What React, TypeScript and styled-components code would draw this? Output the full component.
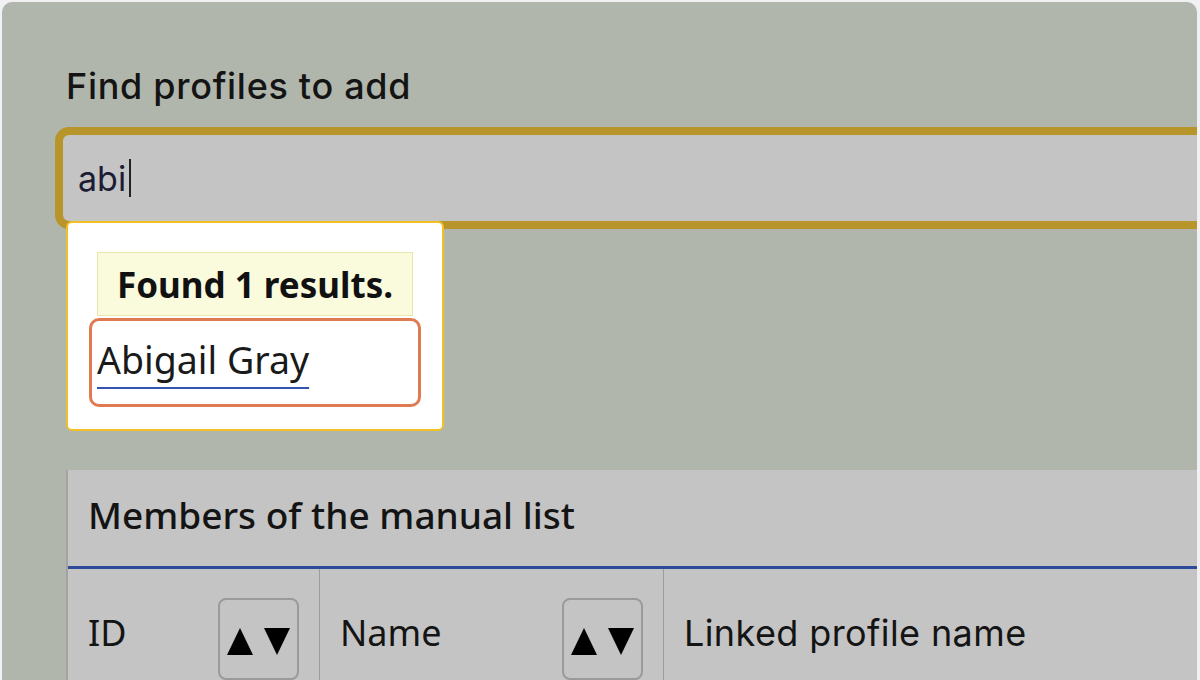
import styled, { createGlobalStyle } from "styled-components"

const GlobalStyle = createGlobalStyle`
  html, body {
    margin: 0;
    padding: 0;
    background: #f1f1f4;
    overflow: hidden;
  }
`

const Frame = styled.div`
  margin: 2px 3px 0 2px;
  height: 678px;
  border-radius: 10px 10px 0 0;
  background: #b1b6ac;
  overflow: hidden;
  padding: 0 0 0 53px;
  box-sizing: border-box;
  font-family: Inter, "Noto Sans", sans-serif;
  color: #141414;
`

const Heading = styled.h2`
  margin: 0;
  padding: 64px 0 0 11px;
  font-size: 36px;
  font-weight: 500;
  line-height: 40px;
  letter-spacing: 0.7px;
`

const SearchWrap = styled.div`
  position: relative;
  margin-top: 21px;
  width: 1200px;
`

const SearchInput = styled.div`
  height: 102px;
  box-sizing: border-box;
  border: 8px solid #b8952a;
  border-radius: 14px;
  background: #c4c4c4;
  display: flex;
  align-items: center;
  padding-left: 15px;
  font-size: 34px;
  color: #1c1c34;
`

const Caret = styled.span`
  display: inline-block;
  width: 1.5px;
  height: 38px;
  margin-left: 3px;
  background: #222;
`

const Dropdown = styled.div`
  position: absolute;
  left: 11px;
  top: 94px;
  width: 378px;
  height: 210px;
  box-sizing: border-box;
  background: #fff;
  border: 2px solid #f0c024;
  border-radius: 6px;
  padding: 29px 0 0 29px;
`

const Status = styled.div`
  width: 316px;
  height: 64px;
  box-sizing: border-box;
  background: #fafadc;
  border: 1px solid #e9e7ae;
  display: flex;
  align-items: center;
  justify-content: center;
  font-family: "Noto Sans", Inter, sans-serif;
  font-size: 35px;
  font-weight: 700;
  color: #111;
`

const Option = styled.div`
  margin: 2px 0 0 -8px;
  width: 332px;
  height: 89px;
  box-sizing: border-box;
  border: 3px solid #e07a52;
  border-radius: 10px;
  padding: 13px 0 0 5px;
`

const OptionLink = styled.a`
  font-family: "Noto Sans", Inter, sans-serif;
  font-size: 37.5px;
  color: #1a1a1a;
  text-decoration: underline;
  text-decoration-color: #3553b0;
  text-decoration-thickness: 2px;
  text-underline-offset: 13px;
`

const Panel = styled.div`
  margin: 241px 0 0 11px;
  width: 1200px;
  background: #c4c4c4;
  border-left: 2px solid #a3a3a3;
`

const Caption = styled.div`
  height: 99px;
  box-sizing: border-box;
  padding: 19px 0 0 20px;
  font-family: "Noto Sans", Inter, sans-serif;
  font-size: 37px;
  font-weight: 500;
  border-bottom: 3px solid #2e4a98;
`

const HeaderRow = styled.div`
  display: grid;
  grid-template-columns: 252px 344px 1fr;
  height: 120px;
`

const HeaderCell = styled.div<{ $last?: boolean }>`
  display: flex;
  align-items: flex-start;
  justify-content: space-between;
  padding: 29px 20px 0 20px;
  border-right: ${(p) => (p.$last ? "none" : "1px solid #9c9c9c")};
  font-family: ${(p) => (p.$last ? "Inter" : "'Noto Sans'")}, sans-serif;
  font-size: 36px;
  letter-spacing: ${(p) => (p.$last ? "0.4px" : "0")};
  line-height: 70px;
`

const SortButton = styled.button`
  width: 81px;
  height: 82px;
  box-sizing: border-box;
  border: 2px solid #9a9a9a;
  border-radius: 8px;
  background: transparent;
  display: flex;
  align-items: center;
  justify-content: center;
  gap: 11px;
  padding: 4px 0 0;
  color: #000;
`

const Arrow = styled.span<{ $down?: boolean }>`
  width: 0;
  height: 0;
  border-left: 13px solid transparent;
  border-right: 13px solid transparent;
  ${(p) =>
    p.$down ? "border-top: 27px solid #000;" : "border-bottom: 27px solid #000;"}
`

export default function App() {
  return (
    <>
      <GlobalStyle />
      <Frame>
        <Heading>Find profiles to add</Heading>
        <SearchWrap>
          <SearchInput>
            abi<Caret />
          </SearchInput>
          <Dropdown>
            <Status>Found 1 results.</Status>
            <Option>
              <OptionLink>Abigail Gray</OptionLink>
            </Option>
          </Dropdown>
        </SearchWrap>
        <Panel>
          <Caption>Members of the manual list</Caption>
          <HeaderRow>
            <HeaderCell>
              ID
              <SortButton aria-label="Sort by ID">
                <Arrow />
                <Arrow $down />
              </SortButton>
            </HeaderCell>
            <HeaderCell>
              Name
              <SortButton aria-label="Sort by name">
                <Arrow />
                <Arrow $down />
              </SortButton>
            </HeaderCell>
            <HeaderCell $last>Linked profile name</HeaderCell>
          </HeaderRow>
        </Panel>
      </Frame>
    </>
  )
}
